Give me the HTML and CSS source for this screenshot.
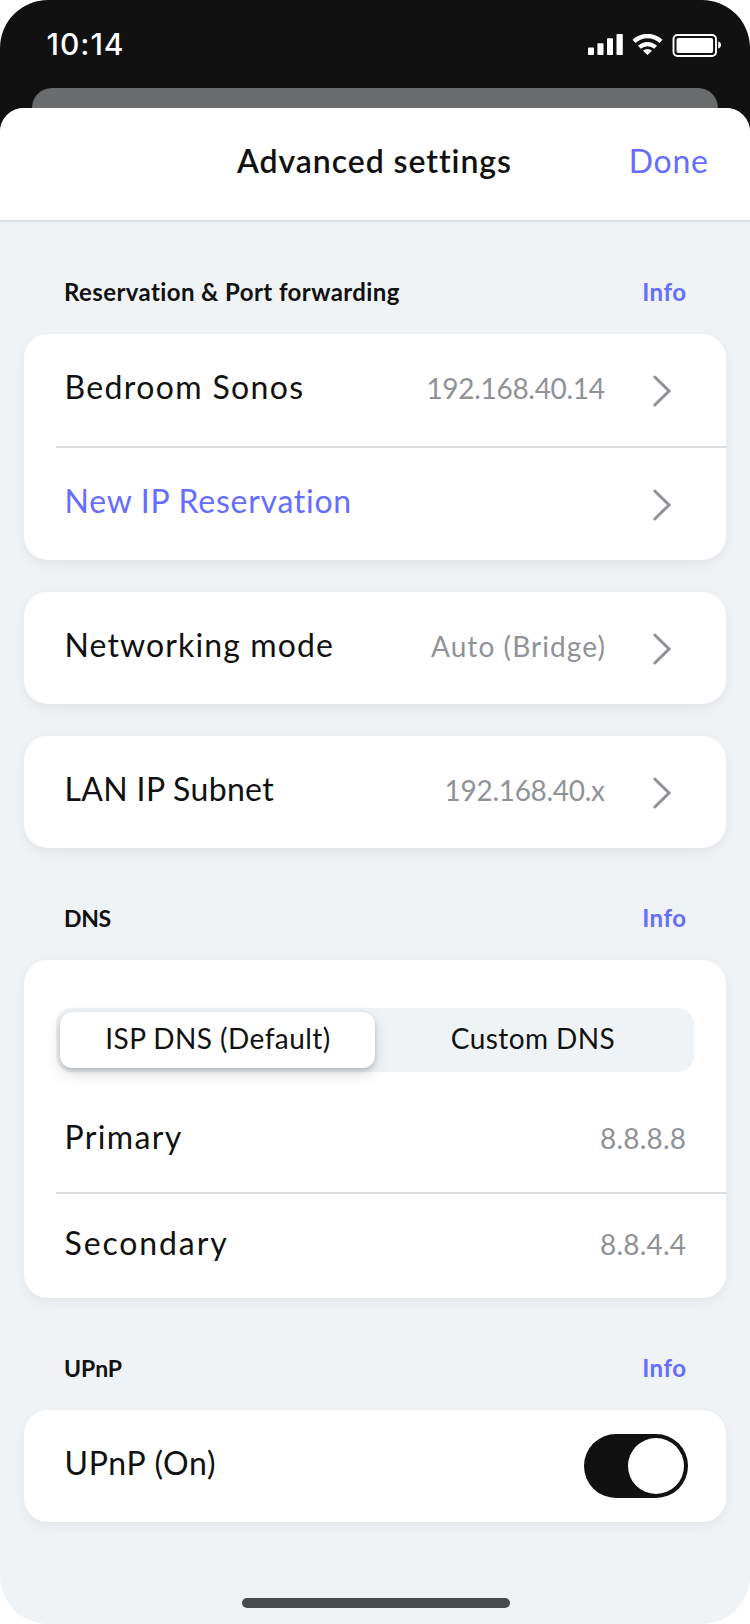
FILE: index.html
```html
<!DOCTYPE html>
<html lang="en">
<head>
<meta charset="utf-8">
<title>Advanced settings</title>
<link rel="stylesheet" href="styles.css">
</head>
<body>
<div class="phone">
  <div class="backdrop">
    <div class="status-bar">
      <span class="time">10:14</span>
      <svg class="status-icons" viewBox="588 34 134 23" width="134" height="23" fill="#fff">
        <rect x="588" y="47.5" width="6" height="7.5" rx=".8"/>
        <rect x="597.4" y="43.2" width="6.1" height="11.8" rx=".8"/>
        <rect x="607" y="38.3" width="6" height="16.7" rx=".8"/>
        <rect x="616.5" y="34" width="6.3" height="21" rx=".8"/>
        <path d="M634 41.4A19.6 19.6 0 0 1 661 41.4" fill="none" stroke="#fff" stroke-width="4.4"/>
        <path d="M639.4 47.3A11.8 11.8 0 0 1 655.6 47.3" fill="none" stroke="#fff" stroke-width="4.2"/>
        <path d="M647.5 55L643 50.7A6.6 6.6 0 0 1 652 50.7Z"/>
        <rect x="673.5" y="35" width="42.5" height="21" rx="4" fill="none" stroke="#fff" stroke-width="1.9"/>
        <rect x="676.5" y="38" width="36.6" height="15" rx="2"/>
        <path d="M718.2 41.5C720 42 721 43.4 721 45S720 48 718.2 48.5Z"/>
      </svg>
    </div>
    <div class="back-sheet"></div>
  </div>
  <main class="sheet">
    <header class="nav">
      <h1 class="title">Advanced settings</h1>
      <a class="done">Done</a>
    </header>

    <div class="section-head">
      <h2 class="head-long">Reservation &amp; Port forwarding</h2>
      <a class="info">Info</a>
    </div>
    <section class="card">
      <div class="row">
        <span class="label ls-sonos">Bedroom Sonos</span>
        <span class="value ls-ip">192.168.40.14</span>
        <svg class="chevron" viewBox="0 0 18 32" width="18" height="32"><path d="M1.8 2L16 16L1.8 30"/></svg>
      </div>
      <div class="row divided">
        <span class="label link ls-new">New IP Reservation</span>
        <svg class="chevron" viewBox="0 0 18 32" width="18" height="32"><path d="M1.8 2L16 16L1.8 30"/></svg>
      </div>
    </section>
    <section class="card">
      <div class="row">
        <span class="label ls-mode">Networking mode</span>
        <span class="value ls-auto">Auto (Bridge)</span>
        <svg class="chevron" viewBox="0 0 18 32" width="18" height="32"><path d="M1.8 2L16 16L1.8 30"/></svg>
      </div>
    </section>
    <section class="card">
      <div class="row">
        <span class="label ls-lan">LAN IP Subnet</span>
        <span class="value ls-ip">192.168.40.x</span>
        <svg class="chevron" viewBox="0 0 18 32" width="18" height="32"><path d="M1.8 2L16 16L1.8 30"/></svg>
      </div>
    </section>

    <div class="section-head">
      <h2 class="head-dns">DNS</h2>
      <a class="info">Info</a>
    </div>
    <section class="card dns-card">
      <div class="segmented">
        <span class="segment active">ISP DNS (Default)</span>
        <span class="segment">Custom DNS</span>
      </div>
      <div class="row compact">
        <span class="label ls-primary">Primary</span>
        <span class="value ls-dns">8.8.8.8</span>
      </div>
      <div class="row compact divided">
        <span class="label ls-secondary">Secondary</span>
        <span class="value ls-dns">8.8.4.4</span>
      </div>
    </section>

    <div class="section-head">
      <h2 class="head-upnp">UPnP</h2>
      <a class="info">Info</a>
    </div>
    <section class="card">
      <div class="row">
        <span class="label ls-upnp">UPnP (On)</span>
        <span class="toggle"><span class="knob"></span></span>
      </div>
    </section>
    <div class="home-indicator"></div>
  </main>
</div>
</body>
</html>
```

FILE: styles.css
```css
* {
  box-sizing: border-box;
}

body {
  margin: 0;
  background: #fff;
  color: #111;
  font-family: Lato, "Open Sans", sans-serif;
}

.phone {
  display: flex;
  flex-direction: column;
  width: 750px;
  height: 1624px;
}

.backdrop {
  height: 140px;
  margin-bottom: -32px;
  border-radius: 48px 48px 0 0;
  background: #111;
}

.status-bar {
  display: flex;
  justify-content: space-between;
  height: 88px;
  padding: 26px 28px 0 46.5px;
}

.time {
  color: #fff;
  font: 500 30px/37px Inter, sans-serif;
  letter-spacing: 1px;
}

.status-icons {
  margin-top: 8px;
}

.back-sheet {
  height: 44px;
  margin: 0 32px;
  border-radius: 20px 20px 0 0;
  background: #6a6b6c;
}

.sheet {
  position: relative;
  display: flex;
  flex: 1;
  flex-direction: column;
  border-radius: 24px 24px 48px 48px;
  background: #eff3f6;
}

.nav {
  display: grid;
  grid-template-columns: 1fr auto 1fr;
  height: 114px;
  padding: 34px 42px 0;
  border-bottom: 2px solid #dddedf;
  border-radius: 24px 24px 0 0;
  background: #fff;
  font-size: 32px;
  line-height: 38px;
}

.title {
  --ls: 0.94px;
  grid-column: 2;
  margin: 0 1px 0 0;
  font-size: inherit;
  font-weight: 600;
  letter-spacing: var(--ls);
}

.done {
  --ls: 0.75px;
  justify-self: end;
  margin-right: calc(-1 * var(--ls));
  color: #666dff;
  letter-spacing: var(--ls);
}

.section-head {
  display: flex;
  justify-content: space-between;
  height: 112px;
  padding: 56px 64px 0;
  font-size: 24px;
  font-weight: 700;
  line-height: 28px;
}

.section-head h2 {
  margin: 0;
  font: inherit;
  letter-spacing: var(--ls);
}

.section-head .head-long {
  --ls: 0.4px;
}

.section-head .head-dns {
  --ls: -0.3px;
  font-size: 23px;
}

.section-head .head-upnp {
  --ls: 0;
  font-size: 23px;
}

.info {
  margin-right: -0.5px;
  color: #666dff;
  letter-spacing: 0.5px;
}

.card {
  margin: 0 24px;
  border-radius: 24px;
  background: #fff;
  box-shadow: 0 4px 12px rgba(17, 17, 17, 0.06);
}

.card + .card {
  margin-top: 32px;
}

.row {
  position: relative;
  display: flex;
  align-items: baseline;
  height: 112px;
  padding: 34px 40px 0 40.5px;
  line-height: 38px;
}

.row.compact {
  height: 104px;
  padding-top: 30px;
}

.row.divided {
  height: 114px;
  padding-top: 36px;
}

.row.compact.divided {
  height: 106px;
  padding-top: 32px;
}

.divided::before {
  content: "";
  position: absolute;
  top: 0;
  right: 0;
  left: 32px;
  height: 2px;
  background: #dddedf;
}

.label {
  flex: 1;
  font-size: 32px;
  letter-spacing: var(--ls);
}

.link {
  color: #666dff;
}

.value {
  margin-right: calc(-1 * var(--ls));
  color: #8f9296;
  font-size: 28px;
  letter-spacing: var(--ls);
}

.ls-sonos { --ls: 1.36px; }
.ls-new { --ls: 0.74px; }
.ls-mode { --ls: 1.12px; }
.ls-lan { --ls: 0.34px; }
.ls-primary { --ls: 1.36px; }
.ls-secondary { --ls: 1.88px; }
.ls-upnp { --ls: 0.7px; }
.ls-ip { --ls: -0.3px; }
.ls-auto { --ls: 1.08px; }
.ls-dns { --ls: 0.2px; }

.chevron {
  align-self: flex-start;
  margin: 7px 15px 0 48px;
  fill: none;
  stroke: #8f9296;
  stroke-width: 3;
  stroke-linecap: round;
}

.dns-card {
  padding-top: 48px;
}

.segmented {
  display: flex;
  height: 64px;
  margin: 0 32px 16px;
  padding: 4px;
  border-radius: 16px;
  background: #eff3f6;
}

.segment {
  flex: 1;
  padding: 9px 0 0 1px;
  border-radius: 12px;
  font-size: 28px;
  line-height: 34px;
  letter-spacing: 0.44px;
  text-align: center;
}

.segment.active {
  background: #fff;
  box-shadow: 0 6px 16px rgba(0, 0, 0, 0.12), 0 3px 5px rgba(0, 0, 0, 0.15), 0 0 1px rgba(0, 0, 0, 0.12);
}

.toggle {
  align-self: flex-start;
  display: flex;
  justify-content: flex-end;
  width: 104px;
  height: 64px;
  margin: -10px -2px 0 0;
  padding: 4px;
  border-radius: 32px;
  background: #111;
}

.knob {
  width: 56px;
  height: 56px;
  border-radius: 50%;
  background: #fff;
}

.home-indicator {
  width: 268px;
  height: 10px;
  margin: 76px 240px 0 242px;
  border-radius: 5px;
  background: #48494a;
}
```
